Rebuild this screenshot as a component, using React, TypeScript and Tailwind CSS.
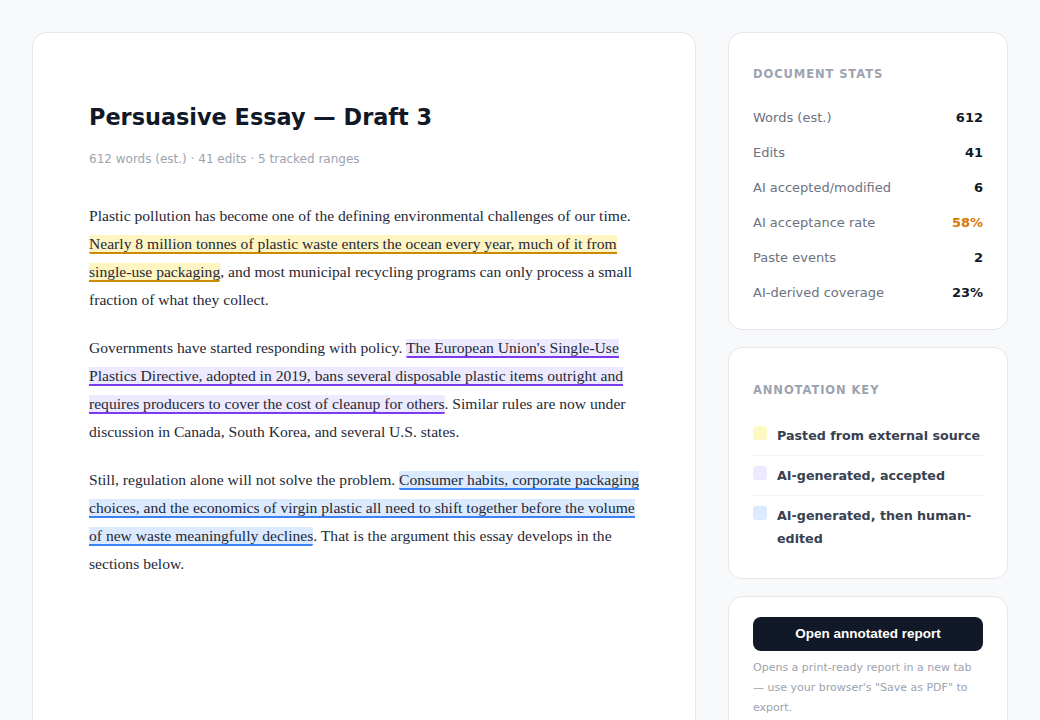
const sans = { fontFamily: '"DejaVu Sans", Verdana, sans-serif' }

const stats = [
  { label: 'Words (est.)', value: '612' },
  { label: 'Edits', value: '41' },
  { label: 'AI accepted/modified', value: '6' },
  { label: 'AI acceptance rate', value: '58%', warn: true },
  { label: 'Paste events', value: '2' },
  { label: 'AI-derived coverage', value: '23%' },
]

const keys = [
  { label: 'Pasted from external source', swatch: 'bg-[#fef9c3]' },
  { label: 'AI-generated, accepted', swatch: 'bg-[#ede9fe]' },
  { label: 'AI-generated, then human-edited', swatch: 'bg-[#dbeafe]' },
]

function Mark({ kind, children }: { kind: 'paste' | 'ai' | 'edited'; children: React.ReactNode }) {
  const cls =
    kind === 'paste'
      ? 'bg-[#fef5c2] border-[#ca8a04]'
      : kind === 'ai'
        ? 'bg-[#ede9fe] border-[#7c3aed]'
        : 'bg-[#dbeafe] border-[#3b82f6]'
  return <span className={`rounded-[2px] border-b-2 ${cls}`}>{children}</span>
}

export default function App() {
  return (
    <div className="min-h-screen bg-[#f8f9fb] p-8" style={sans}>
      <div className="flex items-start gap-8">
        <main className="min-h-[760px] w-[664px] shrink-0 rounded-[14px] border border-[#e5e7eb] bg-white px-14 pt-[68px]">
          <h1 className="text-[22.4px] font-bold leading-8 text-[#111827]">Persuasive Essay — Draft 3</h1>
          <p className="mt-[16px] text-[12px] leading-5 text-[#9ca3af]">
            612 words (est.) · 41 edits · 5 tracked ranges
          </p>
          <div
            className="mt-[33px] flex flex-col gap-5 text-[15.6px] leading-[28px] text-[#1f2937]"
            style={{ fontFamily: '"Liberation Serif", "Times New Roman", serif' }}
          >
            <p>
              Plastic pollution has become one of the defining environmental challenges of our time.{' '}
              <Mark kind="paste">
                Nearly 8 million tonnes of plastic waste enters the ocean every year, much of it from
                single-use packaging
              </Mark>
              , and most municipal recycling programs can only process a small fraction of what they collect.
            </p>
            <p>
              Governments have started responding with policy.{' '}
              <Mark kind="ai">
                The European Union's Single-Use Plastics Directive, adopted in 2019, bans several disposable
                plastic items outright and requires producers to cover the cost of cleanup for others
              </Mark>
              . Similar rules are now under discussion in Canada, South Korea, and several U.S. states.
            </p>
            <p>
              Still, regulation alone will not solve the problem.{' '}
              <Mark kind="edited">
                Consumer habits, corporate packaging choices, and the economics of virgin plastic all need to
                shift together before the volume of new waste meaningfully declines
              </Mark>
              . That is the argument this essay develops in the sections below.
            </p>
          </div>
        </main>

        <aside className="flex w-[280px] shrink-0 flex-col gap-[17px]">
          <section className="rounded-[14px] border border-[#e5e7eb] bg-white px-6 pt-[33px] pb-[19px]">
            <h2 className="mb-[18px] text-[11.5px] font-bold uppercase leading-4 tracking-[0.08em] text-[#9ca3af]">
              Document stats
            </h2>
            {stats.map((s) => (
              <div key={s.label} className="flex h-[35px] items-center justify-between text-[13px]">
                <span className="text-[#6b7280]">{s.label}</span>
                <span className={`font-bold ${s.warn ? 'text-[#d97706]' : 'text-[#111827]'}`}>{s.value}</span>
              </div>
            ))}
          </section>

          <section className="rounded-[14px] border border-[#e5e7eb] bg-white px-6 pt-[34px] pb-5">
            <h2 className="mb-[18px] text-[11.5px] font-bold uppercase leading-4 tracking-[0.08em] text-[#9ca3af]">
              Annotation key
            </h2>
            {keys.map((k, i) => (
              <div
                key={k.label}
                className={`flex items-start gap-[10px] py-2 ${i > 0 ? 'border-t border-[#f1f2f4]' : ''}`}
              >
                <span className={`mt-[2px] h-[14px] w-[14px] shrink-0 rounded-[3px] ${k.swatch}`} />
                <span className="flex-1 text-[12.7px] font-bold leading-[23px] text-[#374151]">{k.label}</span>
              </div>
            ))}
          </section>

          <section className="rounded-[14px] border border-[#e5e7eb] bg-white px-6 pt-5 pb-5">
            <button
              type="button"
              className="h-[34px] w-full rounded-lg bg-[#111827] text-[13.5px] font-bold text-white"
              style={{ fontFamily: '"Liberation Sans", Arial, sans-serif' }}
            >
              Open annotated report
            </button>
            <p className="mt-[7px] text-[11px] leading-5 text-[#9ca3af]">
              Opens a print-ready report in a new tab
              <br />
              <span className="whitespace-nowrap">— use your browser's "Save as PDF" to</span> export.
            </p>
          </section>
        </aside>
      </div>
    </div>
  )
}
